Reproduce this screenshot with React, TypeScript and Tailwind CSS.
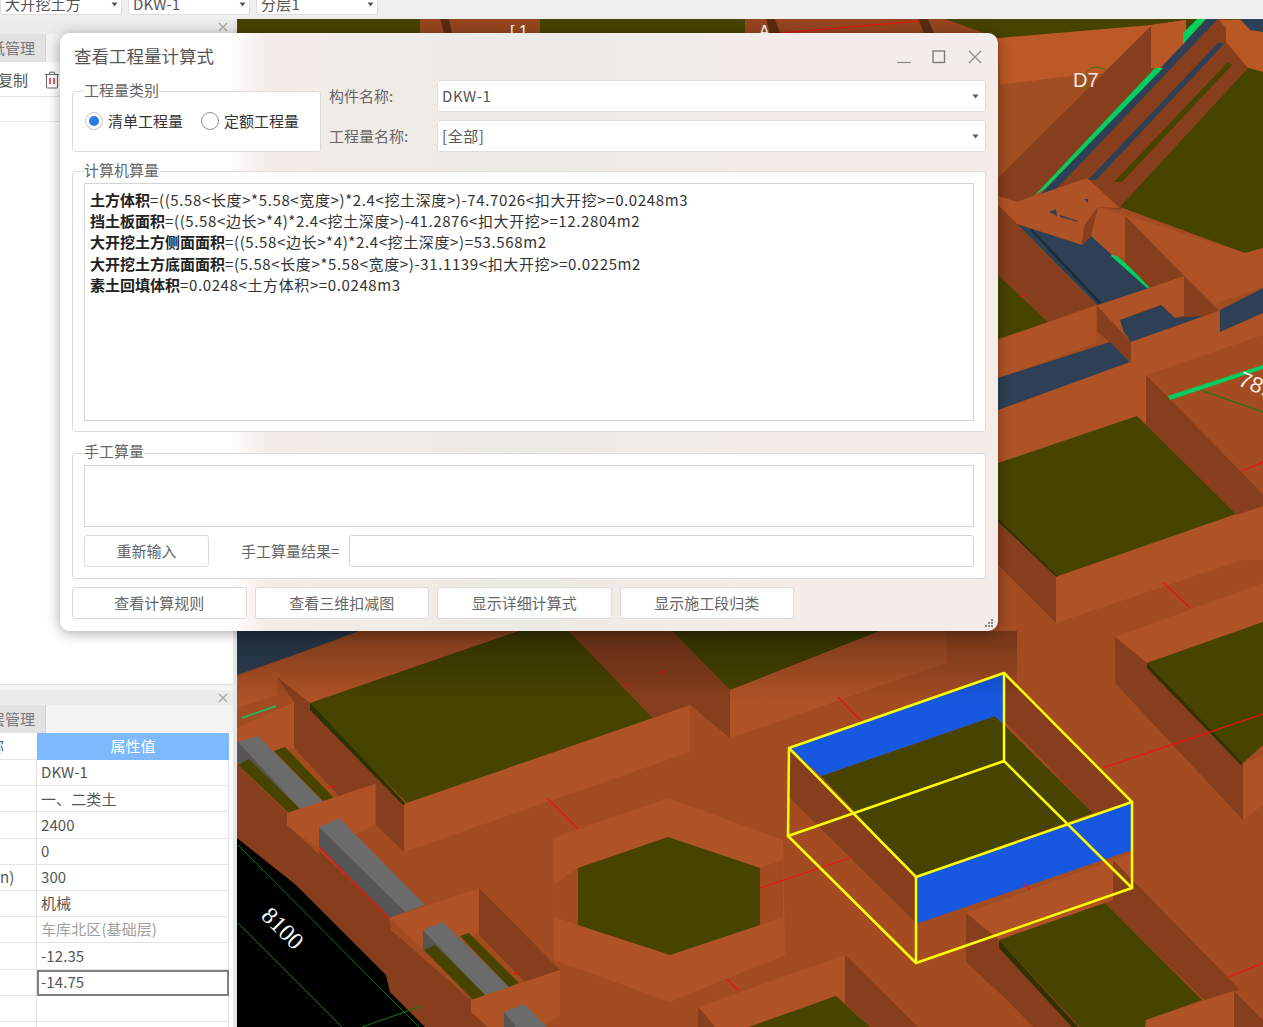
import React from "react";

const FONT = "font-['Noto_Sans_CJK_SC','Noto_Sans',sans-serif]";

const FLOOR = "#a34c22";
const LIGHT = "#af5326";
const DARK = "#873e1c";
const OLIVE = "#474300";
const OLIVE_D = "#2f3200";
const STEEL = "#2e4055";
const GREY = "#6b6b6b";
const GREY_D = "#555555";
const GREEN = "#00d060";

type P = [string, string];

const polys: P[] = [
  // top strip
  [OLIVE, "237,19 420,19 430,33 237,33"],
  ["#96461f", "420,19 540,19 540,33 420,33"],
  ["#5a2c12", "440,19 449,19 452,33 444,33"],
  [OLIVE, "540,19 745,19 745,33 540,33"],
  ["#96461f", "745,19 947,19 1000,38 1000,33 745,33"],
  ["#5a2c12", "766,19 775,19 780,33 770,33"],
  ["#5a2c12", "918,19 928,19 934,33 924,33"],
  // upper right
  [OLIVE, "945,19 1263,19 1263,70 1000,70 998,38"],
  ["#bd5926", "998,38 1151,25 1186,20 1186,68 1151,68 1000,86"],
  ["#a04e22", "998,85 1095,73 998,180"],
  [DARK, "1151,26 1151,68 1155,68 1035,195 1017,202 998,196 998,178"],
  ["#b95725", "1151,25 1186,20 1186,68 1151,68"],
  [DARK, "1186,45 1205,19 1225,19 1225,42 1120,210 1050,200 1060,170"],
  ["#b95725", "1218,20 1263,19 1263,72 1248,68 1222,95 1226,42"],
  [DARK, "1226,42 1248,68 1120,210 1090,190"],
  [STEEL, "1207,19 1218,19 1065,180 1050,195 1040,195"],
  [DARK, "1218,19 1226,28 1226,42 1090,182 1065,182"],
  [STEEL, "1219,42 1224,44 1096,180 1088,180"],
  [OLIVE, "1228,62 1232,65 1122,182 1114,182"],
  [STEEL, "1240,19 1263,19 1263,32 1250,30"],
  [GREEN, "1155,68 1163,68 1046,188 1035,195"],
  [GREEN, "1183,33 1197,19 1206,19 1183,44"],
  [OLIVE, "1120,207 1248,68 1263,72 1263,248 1245,253"],
  // centre-right block
  [LIGHT, "1125,215 1245,253 1263,248 1263,287 1214,304 1185,276"],
  [LIGHT, "998,196 1017,202 1087,178 1120,208 1098,207 1082,245 1017,224 998,205"],
  [STEEL, "1049,212 1056,209 1057,216"],
  [STEEL, "1060,215 1078,221 1078,222 1060,217"],
  [STEEL, "1084,199 1088,199 1088,203"],
  [DARK, "998,205 1017,224 1096,305 1048,322 998,275"],
  [OLIVE, "998,275 1048,322 998,339"],
  [STEEL, "1017,224 1082,245 1091,236 1150,288 1097,305"],
  ["#1c2a3a", "1030,230 1032,229 1102,303 1099,304"],
  [GREEN, "1112,253 1116,255 1152,287 1147,288 1111,256"],
  [LIGHT, "1098,207 1125,216 1125,258 1112,255 1091,236"],
  [DARK, "1098,207 1091,236 1082,245 1084,226"],
  [DARK, "1125,216 1184,276 1184,278 1150,288 1125,262"],
  [LIGHT, "998,410 1263,313 1263,560 998,560"],
  [LIGHT, "1097,306 1184,276 1184,316 1175,318 1161,305 1120,320 1124,333 1131,342"],
  [STEEL, "1120,320 1161,305 1175,318 1202,312 1204,316 1131,342 1124,332"],
  [DARK, "1184,276 1219,311 1203,316 1175,318 1184,316"],
  [LIGHT, "1131,342 1219,311 1219,333 1131,362"],
  [DARK, "1097,306 1131,342 1131,362 1097,331"],
  [LIGHT, "998,340 1096,306 1096,343 998,378"],
  [STEEL, "998,378 1110,342 1130,362 998,410"],
  [STEEL, "1220,310 1263,288 1263,313 1220,332"],
  [FLOOR, "1146,375 1263,335 1263,494"],
  [DARK, "1146,375 1263,494 1263,508 1237,515 1146,425"],
  [OLIVE, "998,463 1137,416 1236,514 1058,576 998,518"],
  [OLIVE_D, "998,518 1058,576 1056,577 998,522"],
  [LIGHT, "1056,577 1263,506 1263,553 1056,623"],
  [DARK, "998,522 1056,577 1056,623 998,565"],
  // right lower block
  [LIGHT, "1115,637 1263,583 1263,622 1147,663"],
  [DARK, "1115,637 1147,663 1243,763 1243,820 1115,683"],
  [OLIVE, "1147,663 1263,622 1263,745 1243,763"],
  [OLIVE_D, "1147,663 1243,763 1241,765 1147,668"],
  [LIGHT, "1243,763 1263,755 1263,805 1243,820"],
  // lower left under dialog
  [STEEL, "237,675 362,631 237,631"],
  [LIGHT, "237,677 359,631 519,631 310,703 277,678 277,695 237,708"],
  [LIGHT, "237,728 294,702 294,748 274,752 238,742"],
  [DARK, "277,677 310,703 404,804 404,852 376,825 376,784 339,796 294,748 294,702"],
  [OLIVE, "310,703 519,631 569,631 653,718 407,803 310,708"],
  [OLIVE_D, "310,703 407,805 403,805 310,710"],
  [LIGHT, "404,804 653,718 690,705 690,752 404,852"],
  [DARK, "569,631 672,631 730,690 730,738 690,705 653,718"],
  [OLIVE, "672,631 880,631 730,690"],
  [LIGHT, "730,690 880,631 947,631 947,663 730,738"],
  // left dark bank
  [DARK, "237,765 288,813 287,825 389,918 391,930 471,1000 471,1012 488,1027 425,1027 390,992 386,975 296,885 237,838"],
  [GREY, "238,742 258,736 323,802 300,809"],
  [GREY_D, "238,742 300,809 295,810 238,762"],
  [OLIVE, "274,751 285,747 334,798 323,801"],
  [OLIVE, "238,765 249,759 300,809 289,813"],
  [LIGHT, "287,813 375,784 375,825 320,850 287,825"],
  [GREY, "319,827 339,818 425,905 405,912"],
  [GREY_D, "319,827 405,912 389,918 319,847"],
  [DARK, "319,850 389,918 391,930 320,862"],
  [LIGHT, "390,918 479,888 479,933 460,945 423,950"],
  [GREY, "423,930 443,922 509,987 485,995"],
  [GREY_D, "423,930 485,995 480,997 423,950"],
  [OLIVE, "460,936 469,933 519,983 509,987"],
  [OLIVE, "424,950 435,945 485,995 473,1000"],
  [DARK, "479,888 560,970 525,982 479,935"],
  [LIGHT, "471,1000 560,970 560,1015 540,1027 488,1027 471,1012"],
  [GREY, "504,1012 524,1004 547,1027 504,1027"],
  [GREY_D, "504,1012 516,1027 504,1027"],
  // black ground
  ["#000000", "237,838 296,885 386,975 390,992 425,1027 237,1027"],
  // hex
  [LIGHT, "553,838 668,798 783,840 785,955 670,1002 554,960"],
  [FLOOR, "553,885 578,868 578,925 554,917"],
  [FLOOR, "760,868 783,860 783,917 760,925"],
  [OLIVE, "578,868 668,837 760,868 760,925 670,955 578,925"],
  // bottom centre
  [LIGHT, "698,1007 845,955 845,1003 836,996 749,1027 715,1027"],
  [DARK, "698,1007 715,1027 698,1027"],
  [DARK, "845,955 918,1027 870,1027 845,1003"],
  [OLIVE, "749,1027 836,996 870,1027"],
  // selected box contents
  [DARK, "789,748 916,877 916,923 789,797"],
  [DARK, "1004,673 1132,802 1093,813 1004,720"],
  [OLIVE, "821,776 995,716 1004,725 1093,813 916,877"],
  ["#1758e0", "789,748 1004,673 1004,725 995,716 821,776"],
  ["#1758e0", "916,877 1132,802 1132,850 916,924"],
  // bottom right
  [LIGHT, "966,913 1132,853 1132,888 1105,903 999,940"],
  [DARK, "1113,860 1240,990 1234,991 1204,1000 1105,903 1113,900"],
  [DARK, "966,913 999,940 1080,1027 1033,1027 1007,1000 966,962"],
  [OLIVE, "999,940 1105,903 1202,1000 1146,1020 1145,1027 1080,1027"],
  [OLIVE_D, "999,940 1078,1027 1072,1027 999,948"],
  [LIGHT, "1146,1020 1234,991 1234,1027 1146,1027"],
  [DARK, "1234,991 1263,1020 1263,1027 1234,1027"],
];

const reds: number[][] = [
  [547, 798, 578, 829],
  [622, 686, 627, 684],
  [659, 673, 666, 671],
  [328, 788, 335, 786],
  [513, 974, 520, 972],
  [727, 979, 739, 991],
  [838, 697, 862, 722],
  [1103, 768, 1263, 714],
  [760, 888, 852, 857],
  [1023, 883, 1030, 890],
  [1063, 783, 1069, 781],
  [1164, 583, 1190, 608],
  [1242, 471, 1263, 462],
  [1205, 483, 1210, 481],
  [1020, 297, 1025, 295],
  [319, 847, 389, 918],
  [1228, 977, 1263, 963],
  [780, 33, 920, 21],
];

function Scene() {
  return (
    <svg viewBox="237 19 1026 1008" className="block h-full w-full" preserveAspectRatio="none">
      <defs>
        <linearGradient id="shade" x1="0" y1="0" x2="0" y2="1">
          <stop offset="0" stopColor="#000" stopOpacity="0.3" />
          <stop offset="1" stopColor="#000" stopOpacity="0" />
        </linearGradient>
      </defs>
      <rect x="237" y="19" width="1026" height="1008" fill={FLOOR} />
      {polys.map(([c, p], i) => (
        <polygon key={i} points={p} fill={c} />
      ))}
      {reds.map((r, i) => (
        <line key={i} x1={r[0]} y1={r[1]} x2={r[2]} y2={r[3]} stroke="#ee1111" strokeWidth="1.2" />
      ))}
      <rect x="237" y="631" width="780" height="70" fill="url(#shade)" />
      <g stroke="#0a7d0a" strokeWidth="1" fill="none">
        <line x1="238" y1="845" x2="419" y2="1027" />
        <line x1="238" y1="923" x2="342" y2="1027" />
        <line x1="362" y1="1027" x2="422" y2="1006" />
        <line x1="1195" y1="388" x2="1263" y2="412" />
        <path d="M1087 89 C1080 72 1092 62 1106 70" stroke="#2f7d0a" />
      </g>
      <g stroke="#00d060" strokeWidth="1.5" fill="none">
        <line x1="242" y1="718" x2="276" y2="706" />
      </g>
      <polygon points="1168,396 1263,365 1263,369 1170,400" fill={GREEN} />
      <text x="1073" y="87" fill="#f5e8e0" fontSize="20" fontFamily="Liberation Sans, sans-serif">D7</text>
      <text x="0" y="0" fill="#f5e8e0" fontSize="22" fontFamily="Liberation Sans, sans-serif" transform="translate(1237 385) rotate(22)">78.</text>
      <text x="0" y="0" fill="#ffffff" fontSize="24" fontFamily="Liberation Serif, serif" transform="translate(260 917) rotate(45)">8100</text>
      <text x="510" y="37" fill="#ffffff" fontSize="16" fontFamily="Liberation Sans, sans-serif">[ 1</text>
      <text x="759" y="37" fill="#ffffff" fontSize="16" fontFamily="Liberation Sans, sans-serif">A</text>
      <g stroke="#ffff00" strokeWidth="2.5" fill="none" strokeLinejoin="round">
        <polygon points="789,748 1004,673 1132,802 916,877" />
        <polygon points="788,836 1004,761 1132,888 916,963" />
        <line x1="789" y1="748" x2="788" y2="836" />
        <line x1="1004" y1="673" x2="1004" y2="761" />
        <line x1="1132" y1="802" x2="1132" y2="888" />
        <line x1="916" y1="877" x2="916" y2="963" />
      </g>
    </svg>
  );
}

function Caret({ className = "" }: { className?: string }) {
  return (
    <svg width="7" height="5" viewBox="0 0 7 5" className={className}>
      <path d="M0.5 0.5h6L3.5 4.5z" fill="#555b66" />
    </svg>
  );
}

function TopSelect({ text, w }: { text: string; w: string }) {
  return (
    <div className={`flex h-[22px] items-center justify-between rounded-[3px] border border-[#dcdcdc] bg-white pl-[4px] pr-[3px] text-[15px] tracking-[0.2px] text-[#555] ${w}`}>
      <span className="whitespace-nowrap">{text}</span>
      <Caret />
    </div>
  );
}

function PanelHead({ tab }: { tab: string }) {
  return (
    <>
      <div className="flex h-[15px] items-center justify-end bg-[#ececec] pr-[5px]">
        <svg width="10" height="10" viewBox="0 0 10 10">
          <path d="M1 1l8 8M9 1l-8 8" stroke="#a8a8a8" strokeWidth="1.3" />
        </svg>
      </div>
      <div className="flex h-[28px] bg-[#f3f3f3]">
        <div className="flex w-[46px] items-center justify-end overflow-hidden whitespace-nowrap border-r border-[#d4d4d4] bg-[#e2e2e2] pr-[10px] text-[15px] text-[#777]">
          {tab}
        </div>
      </div>
    </>
  );
}

const rows: { k?: string; v: string; gray?: boolean; sel?: boolean }[] = [
  { v: "DKW-1" },
  { v: "一、二类土" },
  { v: "2400" },
  { v: "0" },
  { k: "n)", v: "300" },
  { v: "机械" },
  { v: "车库北区(基础层)", gray: true },
  { v: "-12.35" },
  { v: "-14.75", sel: true },
  { v: "" },
  { v: "" },
];

function LeftPanel() {
  return (
    <div className="flex h-full w-[233px] flex-col bg-white">
      <PanelHead tab="图纸管理" />
      <div className="flex h-[35px] shrink-0 items-center gap-[16px] overflow-hidden border-b border-[#e2e2e2] pt-[2px] text-[15px] text-[#555]">
        <span className="ml-[-2px] whitespace-nowrap">复制</span>
        <svg width="16" height="18" viewBox="0 0 16 18" fill="none">
          <path d="M1 3.5h14M5.5 3V1.2h5V3M2.5 3.5V16a1 1 0 001 1h9a1 1 0 001-1V3.5" stroke="#666" strokeWidth="1" />
          <path d="M6 7v6M10 7v6" stroke="#e01a1a" strokeWidth="1.4" />
        </svg>
      </div>
      <div className="h-[25px] shrink-0 border-b border-[#e8e8e8]" />
      <div className="h-[562px] shrink-0" />
      <div className="h-[6px] shrink-0 border-t border-[#dcdcdc] bg-[#f4f4f4]" />
      <PanelHead tab="图层管理" />
      <div className="flex h-[27px] shrink-0 text-[15px]">
        <div className="flex w-[37px] items-center justify-end overflow-hidden whitespace-nowrap border-b border-[#e3e3e3] pr-[33px] text-[#555]">
          属性名称
        </div>
        <div className="flex w-[192px] items-center justify-center bg-[#7db9fb] text-white">属性值</div>
      </div>
      <div className="min-h-0 flex-1 overflow-hidden text-[15px] tracking-[0.1px]">
        {rows.map((r, i) => (
          <div key={i} className="flex h-[26.2px] w-[229px]">
            <div className="flex w-[37px] items-center border-b border-r border-[#e3e3e3] text-[#555]">{r.k}</div>
            <div
              className={`flex flex-1 items-center ${
                r.sel ? "border-2 border-[#808080] pl-[2px]" : "border-b border-r border-[#e3e3e3] pl-[4px]"
              } ${r.gray ? "text-[#a0a0a0]" : "text-[#555]"}`}
            >
              {r.v}
            </div>
          </div>
        ))}
      </div>
    </div>
  );
}

function Select({ label, value }: { label: string; value: string }) {
  return (
    <div className="flex h-[32px] items-center">
      <div className="w-[108px] text-[15px] text-[#666]">{label}</div>
      <div className="flex h-full flex-1 items-center justify-between rounded-[3px] border border-[#dddddd] bg-white pl-[4px] pr-[6px] text-[15px] tracking-[0.6px] text-[#555]">
        <span>{value}</span>
        <Caret />
      </div>
    </div>
  );
}

function Legend({ text, className }: { text: string; className: string }) {
  return (
    <span className={`absolute left-[11px] bg-white text-[15px] leading-[20px] text-[#666] ${className}`}>{text}</span>
  );
}

function Radio({ on, label }: { on?: boolean; label: string }) {
  return (
    <div className="flex items-center gap-[5px]">
      <span className={`flex h-[18px] w-[18px] items-center justify-center rounded-full border bg-white ${on ? "border-[#c4c4c4]" : "border-[#8e8e8e]"}`}>
        {on && <span className="h-[10px] w-[10px] rounded-full bg-[#2a7de1]" />}
      </span>
      <span className="text-[15px] text-[#333]">{label}</span>
    </div>
  );
}

function Btn({ text, w }: { text: string; w: string }) {
  return (
    <div className={`flex h-[32px] items-center justify-center rounded-[3px] border border-[#dcdcdc] bg-white text-[15px] text-[#666] ${w}`}>
      {text}
    </div>
  );
}

const formulas: [string, string][] = [
  ["土方体积", "=((5.58<长度>*5.58<宽度>)*2.4<挖土深度>)-74.7026<扣大开挖>=0.0248m3"],
  ["挡土板面积", "=((5.58<边长>*4)*2.4<挖土深度>)-41.2876<扣大开挖>=12.2804m2"],
  ["大开挖土方侧面面积", "=((5.58<边长>*4)*2.4<挖土深度>)=53.568m2"],
  ["大开挖土方底面面积", "=(5.58<长度>*5.58<宽度>)-31.1139<扣大开挖>=0.0225m2"],
  ["素土回填体积", "=0.0248<土方体积>=0.0248m3"],
];

function Dialog() {
  return (
    <div className="absolute left-[60px] top-[33px] flex h-[598px] w-[938px] flex-col rounded-[10px] bg-[linear-gradient(90deg,#ffffff_0%,#ffffff_18%,#f4ece8_22%,#ecebe6_50%,#f4ece8_75%,#f3ece8_100%)] px-[12px] shadow-[0_2px_14px_rgba(0,0,0,0.35)]">
      <div className="flex h-[47px] shrink-0 items-center justify-between pl-[2px]">
        <span className="text-[17.5px] text-[#555]">查看工程量计算式</span>
        <div className="flex items-center gap-[21px] pr-[3px]">
          <svg width="14" height="14" viewBox="0 0 14 14"><path d="M0 12.5h14" stroke="#8c8c8c" strokeWidth="1.2" /></svg>
          <svg width="14" height="14" viewBox="0 0 14 14" fill="none"><rect x="1" y="1" width="11.5" height="11.5" stroke="#777" strokeWidth="1.3" /></svg>
          <svg width="16" height="16" viewBox="0 0 16 16" fill="none"><path d="M2 2l12 12M14 2L2 14" stroke="#8c8c8c" strokeWidth="1.3" /></svg>
        </div>
      </div>

      <div className="flex h-[72px] shrink-0 gap-[8px]">
        <div className="relative mt-[11px] flex h-[61px] w-[249px] items-start gap-[18px] rounded-[3px] border border-[#dcdcdc] bg-white pl-[12px] pt-[18px]">
          <Legend text="工程量类别" className="top-[-12px]" />
          <Radio on label="清单工程量" />
          <Radio label="定额工程量" />
        </div>
        <div className="flex flex-1 flex-col gap-[8px]">
          <Select label="构件名称:" value="DKW-1" />
          <Select label="工程量名称:" value="[全部]" />
        </div>
      </div>

      <div className="relative mt-[19px] h-[261px] shrink-0 rounded-[3px] border border-[#dcdcdc] bg-white px-[11px] pt-[11px]">
        <Legend text="计算机算量" className="top-[-12px]" />
        <div className="h-[238px] border border-[#d4d4d4] bg-white px-[5px] pt-[5px] text-[15px] leading-[21.2px] text-[#333]">
          {formulas.map(([a, b]) => (
            <div key={a} className="whitespace-nowrap">
              <b className="font-bold text-[#222]">{a}</b>
              <span className="tracking-[0.62px]">{b}</span>
            </div>
          ))}
        </div>
      </div>

      <div className="relative mt-[21px] h-[126px] shrink-0 rounded-[3px] border border-[#dcdcdc] bg-white px-[11px] pt-[11px]">
        <Legend text="手工算量" className="top-[-13px]" />
        <div className="h-[62px] border border-[#d4d4d4] bg-white" />
        <div className="mt-[8px] flex h-[32px] items-center">
          <Btn text="重新输入" w="w-[125px]" />
          <span className="ml-[32px] w-[108px] whitespace-nowrap text-[15px] text-[#666]">手工算量结果=</span>
          <div className="h-full flex-1 rounded-[3px] border border-[#d4d4d4] bg-white" />
        </div>
      </div>

      <div className="mt-[8px] flex shrink-0 gap-[8px]">
        <Btn text="查看计算规则" w="w-[174.5px]" />
        <Btn text="查看三维扣减图" w="w-[174.5px]" />
        <Btn text="显示详细计算式" w="w-[174.5px]" />
        <Btn text="显示施工段归类" w="w-[174.5px]" />
      </div>

      <svg width="10" height="10" viewBox="0 0 10 10" className="absolute bottom-[3px] right-[4px]">
        <g fill="#8a8a8a">
          <rect x="7" y="1" width="2" height="2" />
          <rect x="4" y="4" width="2" height="2" />
          <rect x="7" y="4" width="2" height="2" />
          <rect x="1" y="7" width="2" height="2" />
          <rect x="4" y="7" width="2" height="2" />
          <rect x="7" y="7" width="2" height="2" />
        </g>
      </svg>
    </div>
  );
}

export default function App() {
  return (
    <div className={`relative flex h-[1027px] w-[1263px] flex-col overflow-hidden bg-[#efefef] ${FONT}`}>
      <div className="flex h-[19px] shrink-0 items-end gap-[6px] overflow-hidden bg-[#efefef] pb-[4px]">
        <TopSelect text="大开挖土方" w="w-[122px] shrink-0" />
        <TopSelect text="DKW-1" w="w-[122px] shrink-0" />
        <TopSelect text="分层1" w="w-[122px] shrink-0" />
      </div>
      <div className="flex min-h-0 flex-1">
        <LeftPanel />
        <div className="w-[4px] bg-[#e6e6e6]" />
        <div className="min-w-0 flex-1">
          <Scene />
        </div>
      </div>
      <Dialog />
    </div>
  );
}
